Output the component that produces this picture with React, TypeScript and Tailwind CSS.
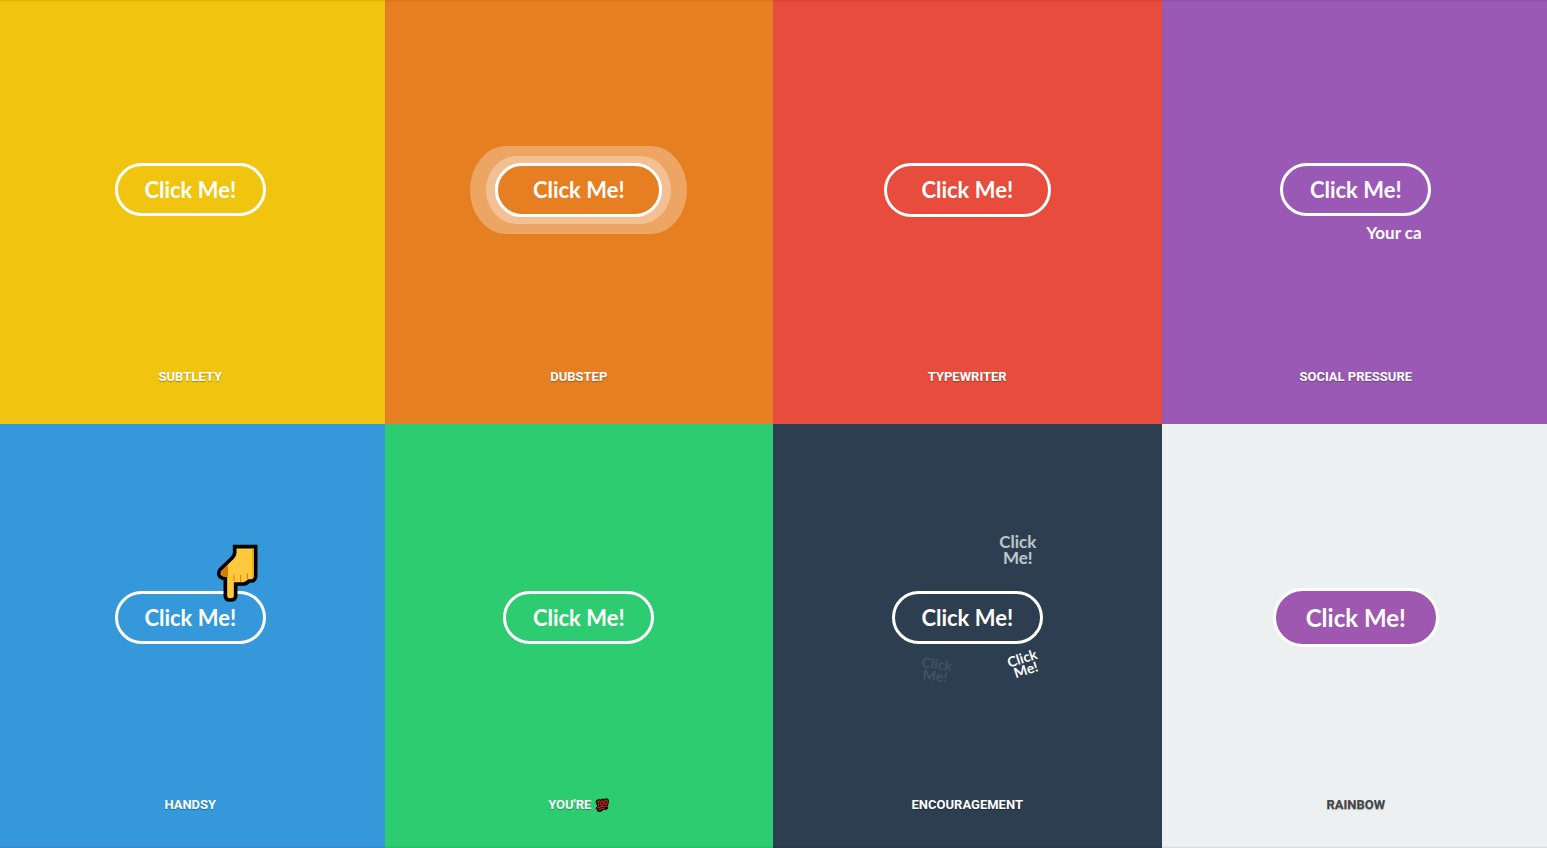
import type { ReactNode } from "react";

const pill =
  "relative flex h-[53px] w-[151px] cursor-pointer items-center justify-center rounded-full border-[3px] border-white text-[22px] leading-none font-bold text-white";
const widePill =
  "relative flex h-[54px] w-[167px] cursor-pointer items-center justify-center rounded-full border-[3px] border-white text-[22px] leading-none font-bold text-white";

function Panel({
  className,
  label,
  labelClass = "text-white",
  children,
}: {
  className: string;
  label: ReactNode;
  labelClass?: string;
  children: ReactNode;
}) {
  return (
    <section className={`flex min-h-72 flex-col items-center pt-[14px] pb-[39px] ${className}`}>
      <div className="flex flex-1 items-center justify-center font-[Lato,sans-serif]">{children}</div>
      <h2
        className={`flex h-4 items-center gap-1 font-[Roboto,sans-serif] text-[13px] leading-4 font-bold uppercase [text-shadow:0_1px_1px_rgba(0,0,0,0.3)] ${labelClass}`}
      >
        {label}
      </h2>
    </section>
  );
}

function PointingHand() {
  return (
    <svg
      className="pointer-events-none absolute -top-[50px] left-[98px] h-[59px] w-[43px]"
      viewBox="348 42 129 177"
      aria-hidden="true"
    >
      <path
        d="M404 50H467V136Q467 151 455 153H447Q440 162 428 162H407V197Q407 210 391 210Q376 210 376 197V146Q366 145 359 139Q353 130 360 119L396 84Q404 77 404 69Z"
        fill="#ffc83d"
        stroke="#000"
        strokeWidth="11"
      />
      <path d="M384 105V140Q370 142 365 136Q361 130 366 122Z" fill="#d67d00" />
      <path d="M456 56H461V140Q461 147 454 147Q457 144 457 137Z" fill="#e8a51b" />
      <path
        d="M402 136V152M422 136V155M442 132V147"
        stroke="#d67d00"
        strokeWidth="3"
        strokeLinecap="round"
        fill="none"
      />
    </svg>
  );
}

function Hundred() {
  return (
    <svg className="h-[14px] w-[14px]" viewBox="0 0 28 28" role="img" aria-label="100">
      <path
        d="M2 6L7 3L11 4L14 2L19 3L24 1L27 4L26 12L24 17L26 20L22 23L18 22L13 26L6 27L4 23L2 20L6 16L3 11Z"
        fill="#080808"
        stroke="#080808"
        strokeWidth="2"
      />
      <g fill="none" stroke="#e0281c" strokeWidth="2.2" strokeLinecap="round">
        <path d="M5 8L8 6L7 15" />
        <ellipse cx="14" cy="10" rx="2.7" ry="4.5" transform="rotate(12 14 10)" />
        <ellipse cx="22" cy="8.5" rx="2.6" ry="4.5" transform="rotate(12 22 8.5)" />
        <path d="M5 20Q14 16 23 16M8 24Q13 21 19 20" />
      </g>
    </svg>
  );
}

export default function App() {
  return (
    <div className="relative overflow-hidden">
      <main className="-my-1 -mr-[3px] -ml-1 grid min-h-[calc(100vh+8px)] grid-cols-4 grid-rows-2">
        <Panel className="bg-[#f1c40f]" label="Subtlety">
          <button type="button" className={pill}>Click Me!</button>
        </Panel>

        <Panel className="bg-[#e67e22]" label="Dubstep">
          <button type="button" className={`${widePill} isolate`}>
            <span className="absolute -inset-x-7 -inset-y-5 -z-10 rounded-[36px/44px] bg-white/30" />
            <span className="absolute -inset-x-3 -inset-y-[10px] -z-10 rounded-[31px/34px] bg-white/30" />
            <span className="absolute -inset-[3px] -z-10 rounded-full border-[3px] border-white bg-[#e67e22]" />
            Click Me!
          </button>
        </Panel>

        <Panel className="bg-[#e74c3c]" label="Typewriter">
          <button type="button" className={widePill}>Click Me!</button>
        </Panel>

        <Panel className="bg-[#9b59b6]" label="Social Pressure">
          <button type="button" className={pill}>
            Click Me!
            <span className="absolute inset-x-[7px] top-full mt-2 overflow-hidden pl-[76px] text-left text-[17px] leading-6 whitespace-nowrap">
              Your ca
            </span>
          </button>
        </Panel>

        <Panel className="bg-[#3498db]" label="Handsy">
          <button type="button" className={pill}>
            Click Me!
            <PointingHand />
          </button>
        </Panel>

        <Panel className="bg-[#2ecc71]" label={<>You're <Hundred /></>}>
          <button type="button" className={pill}>Click Me!</button>
        </Panel>

        <Panel className="bg-[#2c3e50]" label="Encouragement">
          <button type="button" className={pill}>
            Click Me!
            <span className="absolute -top-[60px] left-[99px] w-12 text-center text-[17px] leading-4 opacity-70">
              Click Me!
            </span>
            <span className="absolute top-[58px] left-[109px] w-10 -rotate-[18deg] text-center text-[14px] leading-3">
              Click Me!
            </span>
            <span className="absolute top-16 left-[21px] w-10 rotate-[8deg] text-center text-[14px] leading-3 opacity-10">
              Click Me!
            </span>
          </button>
        </Panel>

        <Panel className="bg-[#ecf0f1]" label="Rainbow" labelClass="text-[#444444]">
          <button
            type="button"
            className="flex h-[59px] w-[166px] cursor-pointer items-center justify-center rounded-full border-[3px] border-white bg-[#9f58b0] text-[24px] leading-none font-bold text-white"
          >
            Click Me!
          </button>
        </Panel>
      </main>
      <div className="pointer-events-none absolute -inset-x-1 inset-y-0 shadow-[inset_0_2px_2px_-1px_rgba(0,0,0,0.1),inset_0_-2px_2px_-1px_rgba(0,0,0,0.1)]" />
    </div>
  );
}
